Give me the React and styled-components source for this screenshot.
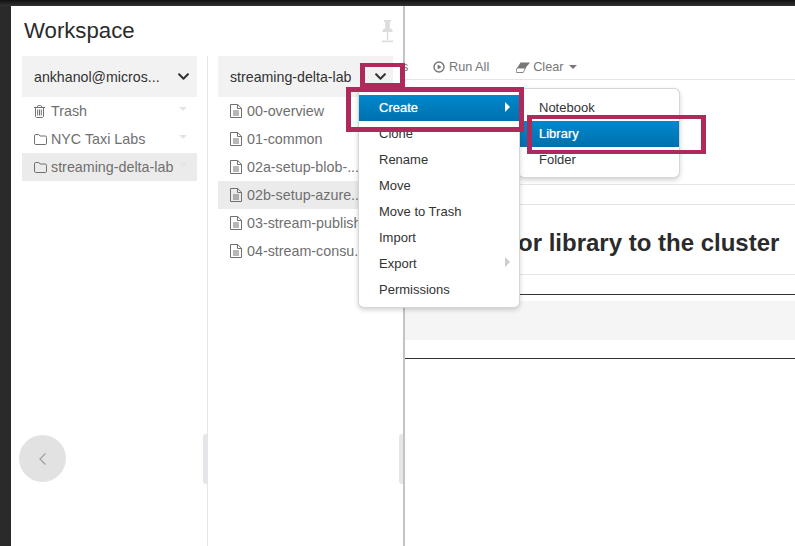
import React from "react";
import styled, { createGlobalStyle } from "styled-components";
import { FaChevronDown } from "react-icons/fa";

const Global = createGlobalStyle`
  html, body { margin: 0; padding: 0; background: #fff; }
  * { box-sizing: border-box; }
`;

const Page = styled.div`
  position: relative;
  width: 795px;
  height: 546px;
  overflow: hidden;
  display: flex;
  flex-direction: column;
  font-family: "Liberation Sans", Arial, sans-serif;
  color: #333;
  background: #fff;
`;
const TopBar = styled.div`
  height: 6px;
  flex: none;
  background: linear-gradient(#111, #333);
`;
const Body = styled.div`
  flex: 1;
  display: flex;
  min-height: 0;
`;
const Rail = styled.div`
  width: 11px;
  flex: none;
  background: #2a2a2a;
`;
const Drawer = styled.aside`
  position: relative;
  z-index: 1;
  width: 394px;
  flex: none;
  display: flex;
  flex-direction: column;
  background: #fff;
  border-right: 2px solid #c4c4c4;
`;
const DrawerHead = styled.div`
  height: 50px;
  flex: none;
  display: flex;
  align-items: center;
  justify-content: space-between;
  padding: 0 10px 0 13px;
`;
const Title = styled.h1`
  margin: 0;
  font-size: 22.2px;
  font-weight: 400;
  color: #2b2b2b;
`;
const Columns = styled.div`
  flex: 1;
  display: flex;
  min-height: 0;
`;
const Column = styled.div`
  position: relative;
  width: ${(p) => p.$width}px;
  padding: 0 10px 0 ${(p) => p.$left}px;
  border-right: ${(p) => (p.$divider ? "1px solid #e6e6e6" : "0")};
`;
const ColumnHead = styled.div`
  height: 41px;
  display: flex;
  align-items: center;
  justify-content: space-between;
  padding: 0 7px 0 12px;
  background: #f2f2f2;
  font-size: 14.2px;
  color: #333;
`;
const HeadChevron = styled(FaChevronDown)`
  width: 13px;
  height: 13px;
  color: #333;
`;
const Row = styled.div`
  position: relative;
  height: 28px;
  display: flex;
  align-items: center;
  padding-left: 12px;
  font-size: 14.3px;
  white-space: nowrap;
  color: #6f6f6f;
  background: ${(p) => (p.$selected ? "#ebebeb" : "transparent")};
`;
const RowIcon = styled.span`
  width: 17px;
  flex: none;
  display: flex;
  align-items: center;
`;
const Caret = styled.span`
  position: absolute;
  right: 10px;
  top: 10px;
  border-left: 4px solid transparent;
  border-right: 4px solid transparent;
  border-top: 4px solid #e4e4e4;
`;
const Handle = styled.div`
  position: absolute;
  right: 0;
  top: 378px;
  width: 4px;
  height: 50px;
  border-radius: 3px 0 0 3px;
  background: #e4e6e9;
`;
const BackButton = styled.button`
  position: absolute;
  left: 8px;
  top: 429px;
  width: 47px;
  height: 47px;
  padding: 0;
  border: 0;
  border-radius: 50%;
  background: #e2e2e2;
  display: flex;
  align-items: center;
  justify-content: center;
`;
const Main = styled.main`
  flex: 1;
  min-width: 0;
  display: flex;
  flex-direction: column;
`;
const Toolbar = styled.div`
  height: 74px;
  flex: none;
  display: flex;
  align-items: flex-end;
  padding: 0 0 4px 0;
  border-bottom: 1px solid #e5e5e5;
  font-size: 12.7px;
  color: #777;
  line-height: 16px;
`;
const ToolStub = styled.span`
  width: 28px;
  flex: none;
  margin-left: -3px;
  margin-right: 3px;
`;
const ToolItem = styled.span`
  display: inline-flex;
  align-items: center;
  gap: ${(p) => p.$gap}px;
  margin-right: ${(p) => p.$after || 0}px;
  svg { flex: none; }
`;
const ToolCaret = styled.span`
  margin-left: 2px;
  border-left: 4px solid transparent;
  border-right: 4px solid transparent;
  border-top: 4px solid #777;
`;
const Rule = styled.div`
  flex: none;
  height: 1px;
  margin-top: ${(p) => p.$top}px;
  background: ${(p) => (p.$dark ? "#333" : "#e5e5e5")};
`;
const Heading = styled.h2`
  flex: none;
  height: 70px;
  margin: 0;
  padding: 6px 0 0 113px;
  display: flex;
  align-items: center;
  font-size: 24px;
  font-weight: 700;
  color: #2b2b2b;
  white-space: nowrap;
  border-bottom: 1px solid #e5e5e5;
`;
const CodeBlock = styled.div`
  flex: none;
  height: 39px;
  margin-top: 6px;
  background: #f5f5f5;
`;
const Menu = styled.div`
  position: absolute;
  z-index: ${(p) => p.$z};
  left: ${(p) => p.$left}px;
  top: 88px;
  width: 162px;
  padding: 5px 0;
  background: #fff;
  border: 1px solid rgba(0, 0, 0, 0.16);
  border-radius: 6px;
  box-shadow: 0 2px 5px rgba(0, 0, 0, 0.18);
  font-size: 13px;
`;
const MenuItem = styled.div`
  position: relative;
  height: 26px;
  display: flex;
  align-items: center;
  padding: 0 0 ${(p) => (p.$active ? 2 : 0)}px 20px;
  margin-top: ${(p) => (p.$active ? 1 : 0)}px;
  margin-bottom: ${(p) => (p.$active ? -1 : 0)}px;
  color: ${(p) => (p.$active ? "#fff" : "#333")};
  text-shadow: ${(p) => (p.$active ? "0 0 1px rgba(255,255,255,.7)" : "none")};
  background: ${(p) => (p.$active ? "linear-gradient(#0088cc, #0070ae)" : "transparent")};
`;
const SubArrow = styled.span`
  position: absolute;
  right: 9px;
  top: 7px;
  border-top: 5px solid transparent;
  border-bottom: 5px solid transparent;
  border-left: 5px solid ${(p) => (p.$active ? "#fff" : "#ccc")};
`;
const Callout = styled.div`
  position: absolute;
  z-index: 5;
  left: ${(p) => p.$left}px;
  top: ${(p) => p.$top}px;
  width: ${(p) => p.$w}px;
  height: ${(p) => p.$h}px;
  border-style: solid;
  border-color: #ae2a5a;
  border-width: ${(p) => p.$v || 5}px 5px;
`;
const ChevronSlot = styled.div`
  position: absolute;
  z-index: 4;
  left: 374px;
  top: 70px;
  display: flex;
`;

const PinIcon = () => (
  <svg width="11" height="23" viewBox="0 0 11 23" fill="#dcdcdc" aria-hidden="true">
    <path d="M2 0h7v1.8H7.8V8c1.6.7 2.8 2 3 4H.2c.2-2 1.4-3.3 3-4V1.8H2z" />
    <rect x="4.8" y="12" width="1.4" height="8" />
    <rect x="0" y="20.6" width="11" height="1.6" />
  </svg>
);
const BackChevron = () => (
  <svg width="10" height="14" viewBox="0 0 10 14" fill="none" stroke="#a3a3a3" strokeWidth="1.4" aria-hidden="true">
    <path d="M7.5 1.5 2 7l5.5 5.5" />
  </svg>
);
const FileIcon = () => (
  <svg width="12" height="14" viewBox="0 0 12 14" fill="none" stroke="#707070" strokeWidth="1" aria-hidden="true">
    <path d="M.5.5h7.2l3.8 3.8v9.2H.5z" />
    <path d="M7.5.5v4h4M3 7h6M3 9h6M3 11h6" />
  </svg>
);
const FolderIcon = () => (
  <svg width="13" height="11" viewBox="0 0 13 11" fill="none" stroke="#707070" strokeWidth="1" aria-hidden="true">
    <path d="M1.8 10.5h9.4a1.3 1.3 0 0 0 1.3-1.3V3.3A1.3 1.3 0 0 0 11.2 2H6L4.8.5H1.8A1.3 1.3 0 0 0 .5 1.8v7.4a1.3 1.3 0 0 0 1.3 1.3z" />
  </svg>
);
const TrashIcon = () => (
  <svg width="11" height="13" viewBox="0 0 11 13" fill="none" stroke="#707070" strokeWidth="1" aria-hidden="true">
    <path d="M0 2.5h11M3.5 2.5V1l1-.5h2l1 .5v1.5M1.5 2.5v9l1 1h6l1-1v-9M3.7 4.5v6M5.5 4.5v6M7.3 4.5v6" />
  </svg>
);
const RunIcon = () => (
  <svg width="12" height="12" viewBox="0 0 12 12" aria-hidden="true">
    <circle cx="6" cy="6" r="5" fill="none" stroke="#777" strokeWidth="1.4" />
    <path d="M4.6 3.4 8.6 6l-4 2.6z" fill="#777" />
  </svg>
);
const EraserIcon = () => (
  <svg width="14" height="11" viewBox="0 0 14 11" aria-hidden="true">
    <path d="M4.5 .5H14L9.5 6H1.2z" fill="#777" />
    <path d="M1.2 6H9.5L7.2 10.5H.6L0 9z" fill="#fff" stroke="#777" strokeWidth=".9" />
  </svg>
);

const roots = [
  { name: "Trash", icon: <TrashIcon /> },
  { name: "NYC Taxi Labs", icon: <FolderIcon /> },
  { name: "streaming-delta-lab", icon: <FolderIcon />, selected: true },
];
const files = [
  { name: "00-overview" },
  { name: "01-common" },
  { name: "02a-setup-blob-..." },
  { name: "02b-setup-azure...", selected: true },
  { name: "03-stream-publish" },
  { name: "04-stream-consu..." },
];
const actions = ["Clone", "Rename", "Move", "Move to Trash", "Import", "Export", "Permissions"];

export default function App() {
  return (
    <Page>
      <Global />
      <TopBar />
      <Body>
        <Rail />
        <Drawer>
          <DrawerHead>
            <Title>Workspace</Title>
            <PinIcon />
          </DrawerHead>
          <Columns>
            <Column $width={197} $left={11} $divider>
              <ColumnHead>
                <span>ankhanol@micros...</span>
                <HeadChevron />
              </ColumnHead>
              {roots.map((r) => (
                <Row key={r.name} $selected={r.selected}>
                  <RowIcon>{r.icon}</RowIcon>
                  {r.name}
                  <Caret />
                </Row>
              ))}
              <Handle />
            </Column>
            <Column $width={195} $left={10}>
              <ColumnHead>
                <span>streaming-delta-lab</span>
              </ColumnHead>
              {files.map((f) => (
                <Row key={f.name} $selected={f.selected}>
                  <RowIcon><FileIcon /></RowIcon>
                  {f.name}
                </Row>
              ))}
              <Handle />
            </Column>
          </Columns>
          <BackButton aria-label="Back"><BackChevron /></BackButton>
        </Drawer>
        <Main>
          <Toolbar>
            <ToolStub>s</ToolStub>
            <ToolItem $gap={4} $after={27}><RunIcon />Run All</ToolItem>
            <ToolItem $gap={3}><EraserIcon />Clear<ToolCaret /></ToolItem>
          </Toolbar>
          <Rule $top={104} />
          <Rule $top={19} />
          <Heading>or library to the cluster</Heading>
          <Rule $top={19} $dark />
          <CodeBlock />
          <Rule $top={18} $dark />
        </Main>
      </Body>

      <Menu $z={3} $left={358}>
        <MenuItem $active>Create<SubArrow $active /></MenuItem>
        {actions.map((a) => (
          <MenuItem key={a}>{a}{a === "Export" && <SubArrow />}</MenuItem>
        ))}
      </Menu>
      <Menu $z={2} $left={518}>
        <MenuItem>Notebook</MenuItem>
        <MenuItem $active>Library</MenuItem>
        <MenuItem>Folder</MenuItem>
      </Menu>

      <ChevronSlot><HeadChevron /></ChevronSlot>
      <Callout $left={360} $top={63} $w={45} $h={24} $v={4} />
      <Callout $left={346} $top={87} $w={178} $h={45} />
      <Callout $left={527} $top={115} $w={179} $h={39} $v={4} />
    </Page>
  );
}
